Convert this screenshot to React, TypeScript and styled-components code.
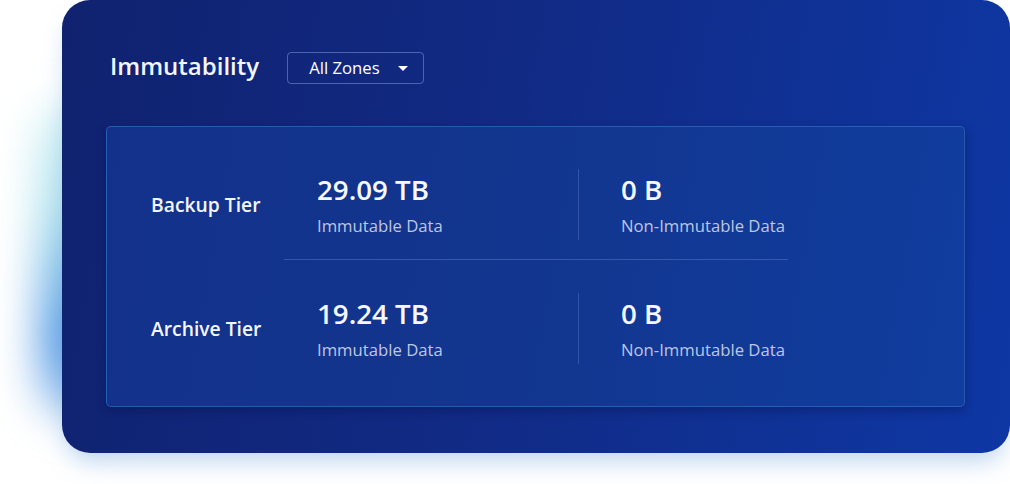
import styled, { createGlobalStyle } from "styled-components";

const GlobalStyle = createGlobalStyle`
  html, body {
    margin: 0;
    padding: 0;
    background: #ffffff;
  }
  body {
    font-family: "Open Sans", "Noto Sans", sans-serif;
    overflow: hidden;
  }
`;

const tiers = [
  { name: "Backup Tier", immutable: "29.09 TB", nonImmutable: "0 B" },
  { name: "Archive Tier", immutable: "19.24 TB", nonImmutable: "0 B" },
];

export default function App() {
  return (
    <>
      <GlobalStyle />
      <Page>
        <Card>
          <Header>
            <Title>Immutability</Title>
            <ZoneSelect>
              <span>All Zones</span>
              <Caret />
            </ZoneSelect>
          </Header>
          <Panel>
            {tiers.map((tier, i) => (
              <div key={tier.name}>
                {i > 0 && <Separator />}
                <TierRow>
                  <TierName>{tier.name}</TierName>
                  <Stat>
                    <StatValue>{tier.immutable}</StatValue>
                    <StatLabel>Immutable Data</StatLabel>
                  </Stat>
                  <Divider />
                  <Stat $padded>
                    <StatValue>{tier.nonImmutable}</StatValue>
                    <StatLabel>Non-Immutable Data</StatLabel>
                  </Stat>
                </TierRow>
              </div>
            ))}
          </Panel>
        </Card>
      </Page>
    </>
  );
}

const Page = styled.div`
  width: 1010px;
  height: 484px;
  position: relative;
  isolation: isolate;
`;

const Card = styled.section`
  position: relative;
  margin-left: 62px;
  width: 948px;
  height: 453px;
  box-sizing: border-box;
  padding: 52px 45px 0 44px;
  border-radius: 28px;
  background: linear-gradient(100deg, #10226f 0%, #112a84 45%, #0e37a4 100%);
  box-shadow: 0 14px 24px -6px rgba(90, 150, 215, 0.4);

  &::before {
    content: "";
    position: absolute;
    left: -24px;
    top: 100px;
    width: 95px;
    bottom: 30px;
    border-radius: 40px;
    background: linear-gradient(
      180deg,
      rgba(170, 230, 235, 0.45) 0%,
      rgba(120, 205, 225, 0.6) 35%,
      rgba(60, 140, 225, 0.85) 75%,
      rgba(120, 175, 230, 0.45) 100%
    );
    filter: blur(20px);
    z-index: -1;
  }
`;

const Header = styled.header`
  display: flex;
  align-items: center;
  gap: 28px;
  padding-left: 4px;
  height: 32px;
`;

const Title = styled.h2`
  margin: 0 0 4px;
  font-size: 24px;
  font-weight: 600;
  line-height: 32px;
  color: #f4f6fc;
`;

const ZoneSelect = styled.button`
  display: flex;
  align-items: center;
  gap: 18px;
  height: 32px;
  box-sizing: border-box;
  padding: 0 15px 0 21px;
  border: 1px solid rgba(150, 175, 235, 0.45);
  border-radius: 4px;
  background: transparent;
  color: #ffffff;
  font-family: inherit;
  font-size: 16.7px;
  line-height: 1;
`;

const Caret = styled.i`
  width: 0;
  height: 0;
  border-left: 5.5px solid transparent;
  border-right: 5.5px solid transparent;
  border-top: 5.5px solid #ffffff;
  margin-top: 1px;
`;

const Panel = styled.div`
  margin-top: 42px;
  height: 281px;
  box-sizing: border-box;
  padding: 42px 0 0 44px;
  border: 1px solid rgba(70, 150, 225, 0.4);
  border-radius: 5px;
  background: linear-gradient(100deg, #13318a 0%, #12368f 50%, #103d9f 100%);
  box-shadow: 0 4px 10px rgba(5, 15, 70, 0.35);
`;

const TierRow = styled.div`
  display: flex;
  align-items: center;
  height: 71px;
`;

const TierName = styled.div`
  width: 110px;
  margin-right: 56px;
  white-space: nowrap;
  font-size: 19.3px;
  font-weight: 600;
  color: #f4f6fc;
`;

const Stat = styled.div<{ $padded?: boolean }>`
  display: flex;
  flex-direction: column;
  gap: 8px;
  width: ${(p) => (p.$padded ? "auto" : "261px")};
  padding-left: ${(p) => (p.$padded ? "42px" : "0")};
`;

const StatValue = styled.div`
  font-size: 27.7px;
  font-weight: 600;
  line-height: 34px;
  color: #f6f8fd;
`;

const StatLabel = styled.div`
  font-size: 16.7px;
  line-height: 24px;
  color: #bfc6e3;
`;

const Divider = styled.div`
  width: 1px;
  align-self: stretch;
  background: rgba(160, 190, 245, 0.22);
`;

const Separator = styled.div`
  width: 504px;
  height: 1px;
  margin: 19px 0 33px 133px;
  background: rgba(160, 190, 245, 0.25);
`;
